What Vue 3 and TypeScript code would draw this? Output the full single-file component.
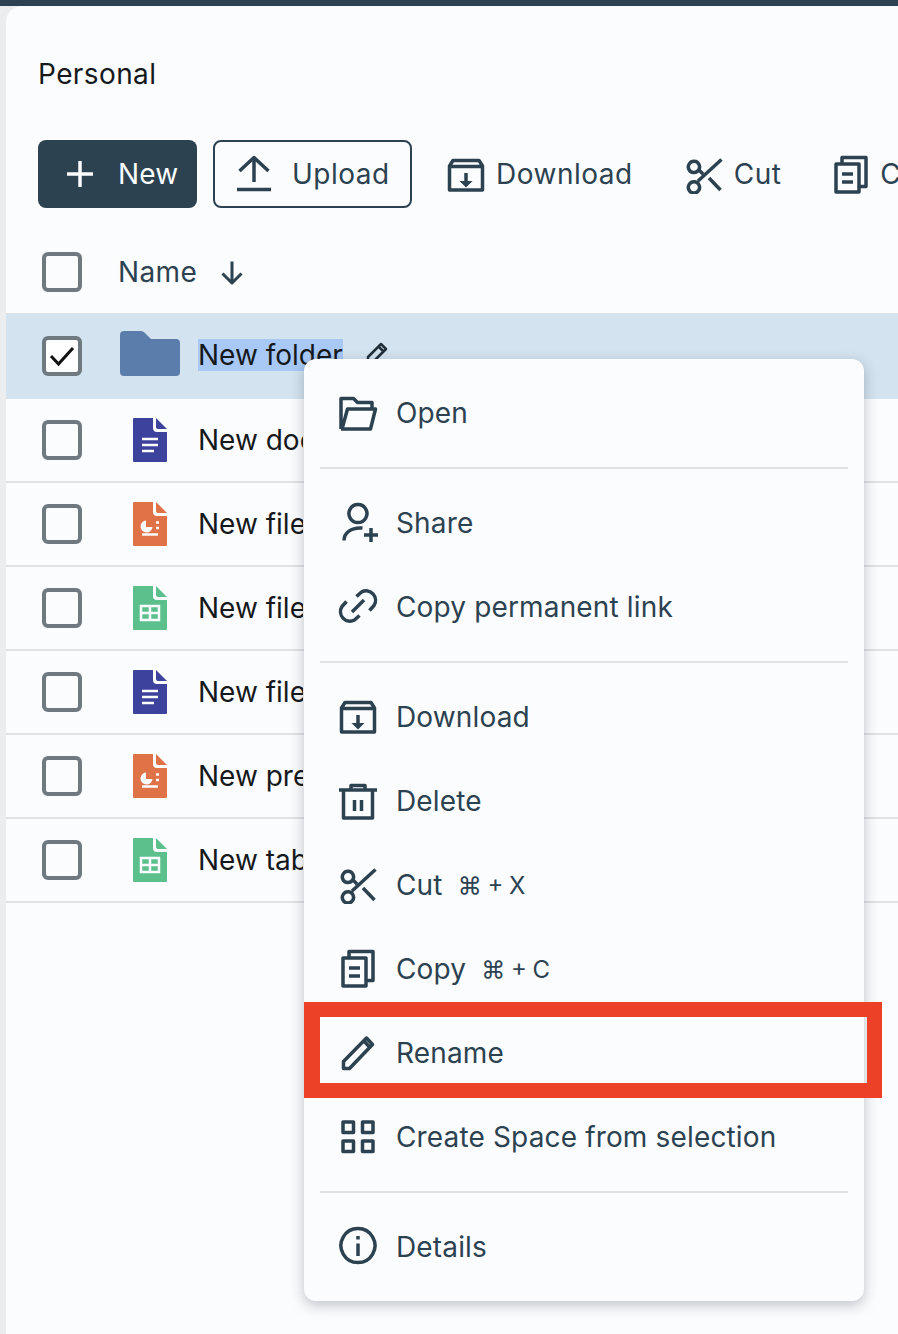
<script setup lang="ts">
const icons: Record<string, { s: string; f?: string }> = {
  open: { s: 'M3 37V6.5H15.5L19.5 10.5H34V16M3 37H32.5L37.5 17H9.5L4 37' },
  share: { s: 'M20 2.5A9 9 0 1 1 19.9 2.5ZM6 38.5C6 31 13 25 24.5 26M26 33H40M33 26V40' },
  link: { s: 'M18.5 10.5L23.5 6A9.5 9.5 0 0 1 36 19.5L31.5 24.5M21.5 29.5L16.5 34A9.5 9.5 0 0 1 4 20.5L8.5 15.5M14 26L26 14' },
  download: { s: 'M3.500 36V12L7 6.500H33L36.500 12V36ZM3.500 12.500H36.500M20 19V30', f: 'M13.5 27H26.5L20 33.5Z' },
  trash: { s: 'M1 10H39M13 9V5.5H27V9M5.5 10V38H34.5V10M16.5 20V31M23.5 20V31' },
  cut: { s: 'M15 10.500A5.6 5.6 0 1 1 14.900 10.300ZM15 31A5.6 5.6 0 1 1 14.900 30.800ZM37.500 5.500L14 27M14 15L19 20M25 24L36.500 36' },
  copy: { s: 'M5 10H28V38H5ZM11 9.5V3.5H35V32.5H28.5M11 20H22M11 28H22' },
  rename: { s: 'M5.500 36.500V29.500L28.500 6L34.500 12.500L11.500 36.500ZM26 9L31.500 15' },
  grid: { s: 'M5 6H15.5V16.5H5ZM24.5 6H35V16.5H24.5ZM5 25H15.5V35.5H5ZM24.5 25H35V35.5H24.5Z' },
  info: { s: 'M20 2.5A17 17 0 1 1 19.9 2.5ZM20 17.5V30M20 10V13.5' },
  upload: { s: 'M20 4V28M5.5 17L20 3.5L34.5 17M3 35.5H37' },
  plus: { s: 'M20 7V33M7 20H33' },
  down: { s: 'M20 9.500V31M10.500 21.500L20 31L29.500 21.500' },
}

type Item = { icon: string; label: string; key?: string } | { divider: true }
const menu: Item[] = [
  { icon: 'open', label: 'Open' },
  { divider: true },
  { icon: 'share', label: 'Share' },
  { icon: 'link', label: 'Copy permanent link' },
  { divider: true },
  { icon: 'download', label: 'Download' },
  { icon: 'trash', label: 'Delete' },
  { icon: 'cut', label: 'Cut', key: '⌘ + X' },
  { icon: 'copy', label: 'Copy', key: '⌘ + C' },
  { icon: 'rename', label: 'Rename' },
  { icon: 'grid', label: 'Create Space from selection' },
  { divider: true },
  { icon: 'info', label: 'Details' },
]

const rows = [
  { kind: 'doc', name: 'New document.docx' },
  { kind: 'ppt', name: 'New file.pptx' },
  { kind: 'xls', name: 'New file.xlsx' },
  { kind: 'doc', name: 'New file.docx' },
  { kind: 'ppt', name: 'New presentation.pptx' },
  { kind: 'xls', name: 'New table.xlsx' },
]
const colors: Record<string, string> = { doc: '#3d429c', ppt: '#e07248', xls: '#5cc08d' }
</script>

<template>
  <div class="page">
    <div class="topbar"></div>
    <main class="panel">
      <h1 class="title">Personal</h1>

      <div class="toolbar">
        <button class="btn primary">
          <svg class="ic" viewBox="0 0 40 40"><path :d="icons.plus.s" /></svg>
          <span>New</span>
        </button>
        <button class="btn outline">
          <svg class="ic" viewBox="0 0 40 40"><path :d="icons.upload.s" /></svg>
          <span>Upload</span>
        </button>
        <div class="tool dl">
          <svg class="ic" viewBox="0 0 40 40"><path :d="icons.download.s" /><path class="solid" :d="icons.download.f" /></svg>
          <span>Download</span>
        </div>
        <div class="tool ct">
          <svg class="ic" viewBox="0 0 40 40"><path :d="icons.cut.s" /></svg>
          <span>Cut</span>
        </div>
        <div class="tool cp">
          <svg class="ic" viewBox="0 0 40 40"><path :d="icons.copy.s" /></svg>
          <span>Copy</span>
        </div>
      </div>

      <div class="head">
        <span class="box"></span>
        <span class="head-name">Name</span>
        <svg class="ic sort" viewBox="0 0 40 40"><path :d="icons.down.s" /></svg>
      </div>

      <div class="row selected">
        <span class="box checked">
          <svg viewBox="0 0 32 32" width="32" height="32"><path d="M5 16L12.5 24L27 8" /></svg>
        </span>
        <span class="slot folder">
          <svg width="60" height="45" viewBox="0 0 60 45"><path fill="#5a7dab" d="M4 0H21Q23 0 24.500 1.500L31 8H56Q60 8 60 12V41Q60 45 56 45H4Q0 45 0 41V4Q0 0 4 0Z" /></svg>
        </span>
        <span class="name-sel"><span class="hl">New folder</span></span>
        <svg class="edit" viewBox="0 0 24 24" width="24" height="24"><path d="M3 21V16L16 3L21 8L8 21ZM13.500 5.500L18.500 10.500" /></svg>
      </div>

      <div v-for="r in rows" :key="r.name" class="row">
        <span class="box"></span>
        <span class="slot">
          <svg width="34" height="44" viewBox="0 0 34 44">
            <path :fill="colors[r.kind]" d="M1 0H20V10Q20 14 24 14H34V43Q34 44 33 44H1Q0 44 0 43V1Q0 0 1 0Z" />
            <path :fill="colors[r.kind]" d="M23 0L34 11H25Q23 11 23 9Z" />
            <g v-if="r.kind === 'doc'" class="glyph">
              <path d="M9 21H25M9 27H25M9 33H21" />
            </g>
            <g v-else-if="r.kind === 'ppt'" class="glyph">
              <path class="pie" d="M13 18.500A6 6 0 1 0 19.500 25H13Z" />
              <path d="M23 20.500H26M23 26H26M9 32.500H25" />
            </g>
            <g v-else class="glyph">
              <path d="M8 20H26V34H8ZM8 27H26M17 20V34" />
            </g>
          </svg>
        </span>
        <span class="name">{{ r.name }}</span>
      </div>
    </main>

    <div class="menu">
      <template v-for="(m, i) in menu" :key="i">
        <div v-if="'divider' in m" class="divider"></div>
        <div v-else class="item">
          <svg class="ic" viewBox="0 0 40 40">
            <path :d="icons[m.icon].s" />
            <path v-if="icons[m.icon].f" class="solid" :d="icons[m.icon].f" />
          </svg>
          <span class="label">{{ m.label }}</span>
          <span v-if="m.key" class="key">{{ m.key }}</span>
        </div>
      </template>
    </div>

    <div class="annotation"></div>
  </div>
</template>

<style>
html, body { margin: 0; background: #ecedef; }
</style>

<style scoped>
.page {
  position: relative;
  width: 898px;
  height: 1334px;
  overflow: hidden;
  background: #ecedef;
  font-family: Inter, "Liberation Sans", sans-serif;
  font-size: 28px;
  letter-spacing: 0.15px;
  color: #2c4251;
}
.topbar { height: 6px; background: #2c4251; }
.panel {
  margin-left: 6px;
  height: 1328px;
  background: #fbfcfe;
  border-top-left-radius: 16px;
  overflow: hidden;
}
.title {
  margin: 0;
  padding: 48px 0 0 32px;
  font-size: 28px;
  line-height: 40px;
  font-weight: 400;
  letter-spacing: 0.4px;
  color: #16191c;
}
.toolbar {
  display: flex;
  align-items: center;
  margin-top: 46px;
  padding-left: 32px;
  height: 68px;
  white-space: nowrap;
}
.ic {
  width: 40px;
  height: 40px;
  flex: none;
  fill: none;
  stroke: currentColor;
  stroke-width: 3.500;
  stroke-linejoin: round;
}
.ic .solid { fill: currentColor; stroke: none; }
.btn {
  flex: none;
  display: flex;
  align-items: center;
  height: 68px;
  border-radius: 8px;
  font: inherit;
  letter-spacing: inherit;
  box-sizing: border-box;
}
.primary {
  width: 159px;
  padding: 0 0 0 22px;
  gap: 18px;
  background: #2c4251;
  border: none;
  color: #fbfcfe;
}
.outline {
  width: 199px;
  margin-left: 16px;
  padding: 0 0 0 19px;
  gap: 18px;
  letter-spacing: 0.5px;
  background: transparent;
  border: 2px solid #2c4251;
  color: #2c4251;
}
.tool { flex: none; display: flex; align-items: center; gap: 10px; letter-spacing: 0.5px; }
.dl { margin-left: 34px; }
.ct { margin-left: 51px; }
.cp { margin-left: 50px; gap: 9px; }
.head {
  display: flex;
  align-items: center;
  height: 80px;
  margin-top: 24px;
  padding-left: 36px;
}
.head-name { margin-left: 36px; letter-spacing: 0.4px; }
.sort { margin-left: 15px; stroke-width: 3; }
.box {
  flex: none;
  display: flex;
  align-items: center;
  justify-content: center;
  box-sizing: border-box;
  width: 40px;
  height: 40px;
  border: 4px solid #6f7a80;
  border-radius: 6px;
}
.box.checked { background: #fff; }
.box.checked svg { fill: none; stroke: #111; stroke-width: 3; }
.row {
  position: relative;
  display: flex;
  align-items: center;
  height: 82px;
  padding-left: 36px;
  border-bottom: 2px solid #e0e2e5;
  letter-spacing: 0;
  color: #16191c;
}
.row.selected {
  height: 84px;
  margin-top: 1px;
  padding-bottom: 1px;
  border-top: 1px solid #e0e2e5;
  border-bottom: none;
  background: #d3e4f0;
}
.slot {
  flex: none;
  display: flex;
  align-items: center;
  justify-content: center;
  width: 60px;
  margin-left: 38px;
}
.folder { margin-top: -5px; }
.name {
  margin-left: 18px;
  max-width: 105px;
  overflow: hidden;
  white-space: nowrap;
}
.name-sel { margin-left: 18px; white-space: nowrap; margin-top: -2px; }
.hl { background: #a8c9f5; display: inline-block; line-height: 32px; }
.edit { margin-left: 22px; margin-top: -6px; fill: none; stroke: #22303a; stroke-width: 2.500; stroke-linejoin: round; }
.glyph { fill: none; stroke: #fbfcfe; stroke-width: 2.500; }
.glyph .pie { fill: #fbfcfe; stroke: none; }
.menu {
  position: absolute;
  left: 304px;
  top: 359px;
  width: 560px;
  box-sizing: border-box;
  padding: 11px 16px 13px;
  background: #fbfcfe;
  border-radius: 12px;
  box-shadow: 0 4px 14px rgba(30, 40, 50, 0.28);
}
.item {
  display: flex;
  align-items: center;
  height: 84px;
  padding-left: 18px;
  gap: 18px;
  white-space: nowrap;
}
.label { padding-top: 2px; }
.key { padding-top: 2px; margin-left: -3px; font-size: 24px; letter-spacing: 0; word-spacing: -1px; }
.divider { height: 2px; margin: 13px 0 11px; background: #e0e2e5; }
.annotation {
  position: absolute;
  left: 304px;
  top: 1002px;
  width: 578px;
  height: 96px;
  box-sizing: border-box;
  border: 15px solid #ec4027;
  border-left-width: 16px;
}
</style>
